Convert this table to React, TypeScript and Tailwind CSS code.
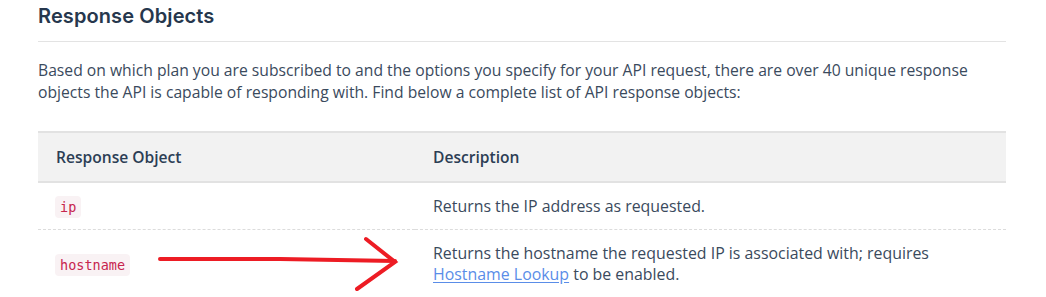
import React from 'react';

const rows = [
  { name: 'ip', desc: <>Returns the IP address as requested.</> },
  {
    name: 'hostname',
    desc: (
      <>
        Returns the hostname the requested IP is associated with; requires
        <br />
        <a href="#" className="text-[#5a8de8] underline underline-offset-2">
          Hostname Lookup
        </a>{' '}
        to be enabled.
      </>
    ),
  },
];

const App: React.FC = () => {
  return (
    <div className="relative bg-white w-[1046px] h-[297px] overflow-hidden">
      <div className="pl-[38px] pr-[40px]">
        <h2 className="font-['Inter',sans-serif] font-semibold text-[20px] text-[#26374d] leading-[24px] pt-[4px] pb-[13px] border-b border-[#e3e3e3] tracking-[0.1px]">
          Response Objects
        </h2>

        <p className="font-['Open_Sans',sans-serif] text-[15.7px] leading-[22px] text-[#3a4a5d] mt-[17px] mb-[28px]">
          Based on which plan you are subscribed to and the options you specify for your API request, there are over 40 unique response objects the API is capable of responding with. Find below a complete list of API response objects:
        </p>

        <table className="w-full border-collapse font-['Open_Sans',sans-serif] text-[15.9px] text-[#3a4a5d]">
          <thead>
            <tr className="bg-[#f2f2f2] border-t-2 border-b-2 border-[#e2e2e2]">
              <th className="w-[377px] text-left font-semibold text-[15.6px] text-[#2c3e55] px-[18px] py-[13px] leading-[22px]">
                Response Object
              </th>
              <th className="text-left font-semibold text-[15.6px] text-[#2c3e55] px-[18px] py-[13px] leading-[22px]">
                Description
              </th>
            </tr>
          </thead>
          <tbody>
            {rows.map((row, i) => (
              <tr
                key={row.name}
                className={i < rows.length - 1 ? 'border-b border-dashed border-[#dcdcdc]' : ''}
              >
                <td className="px-[17px] pt-[13px] pb-[12px] leading-[21px] align-middle">
                  <code className="font-['DejaVu_Sans_Mono',monospace] text-[13.5px] leading-[16px] text-[#c7254e] bg-[#f9f2f4] rounded-[4px] px-[5px] py-[3px]">
                    {row.name}
                  </code>
                </td>
                <td className="px-[18px] pt-[13px] pb-[12px] leading-[21px] align-middle">{row.desc}</td>
              </tr>
            ))}
          </tbody>
        </table>
      </div>

      <svg
        className="absolute left-0 top-0 pointer-events-none"
        width="1046"
        height="297"
        viewBox="0 0 1046 297"
      >
        <g stroke="#ed1c24" strokeWidth="4" strokeLinecap="round" fill="none">
          <path d="M160 259 L280 259 L395 261" />
          <path d="M366 239 L395 262 L357 289" />
        </g>
      </svg>
    </div>
  );
};

export default App;
